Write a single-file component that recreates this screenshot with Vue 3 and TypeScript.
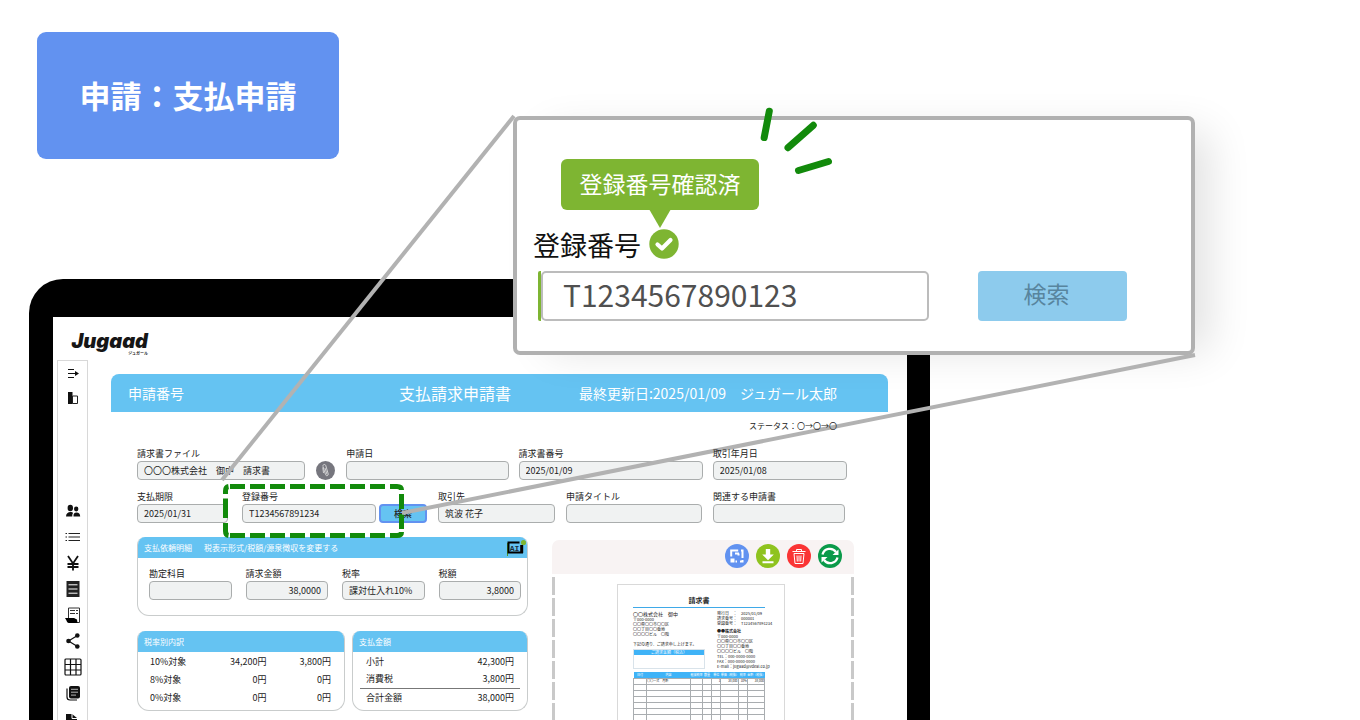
<script setup lang="ts">
interface AmountRow {
  label: string
  values: string[]
}

const taxRows: AmountRow[] = [
  { label: '10%対象', values: ['34,200円', '3,800円'] },
  { label: '8%対象', values: ['0円', '0円'] },
  { label: '0%対象', values: ['0円', '0円'] },
]

const totalRows: AmountRow[] = [
  { label: '小計', values: ['42,300円'] },
  { label: '消費税', values: ['3,800円'] },
  { label: '合計金額', values: ['38,000円'] },
]

const invoiceHead: string[] = ['日付', '内容', '軽減税率', '数量', '単位', '単価（税抜）', '税率', '金額（税抜）']
const invoiceFirst: string[] = ['', '〇〇一式　月額', '', '', '1', '38,000', '10%', '38,000']
const emptyRows = 12
</script>

<template>
  <div class="stage">
    <h1 class="badge">申請：支払申請</h1>

    <div class="device-row">
      <div class="device">
        <div class="screen">
          <header class="brand">
            <div class="logo">Jugaad</div>
            <div class="logo-sub">ジュガール</div>
          </header>
          <div class="body">
            <nav class="sidebar">
              <button aria-label="メニューを開く" class="side first">
                <svg width="14" height="14" viewBox="0 0 14 14" stroke="#111" fill="none"><path d="M2 2.500h6M2 6.500h8M2 10.500h6" stroke-width="1.200" /><path d="M9 4l4 2.500-4 2.500z" fill="#111" stroke="none" /></svg>
              </button>
              <button aria-label="パネル" class="side first">
                <svg width="14" height="14" viewBox="0 0 14 14"><path d="M2 1h4.500v12H2z" fill="#111" /><path d="M6.500 5h5v7.500h-5z" fill="none" stroke="#222" stroke-width="1" /></svg>
              </button>
              <div class="side-gap"></div>
              <button aria-label="ユーザー" class="side">
                <svg width="16" height="16" viewBox="0 0 16 16" fill="#111"><ellipse cx="5.300" cy="5" rx="2.700" ry="3.300" /><ellipse cx="11.200" cy="6" rx="2.200" ry="2.400" /><path d="M1 13.500c0-3 2-4.500 4.500-4.500 1.300 0 2 .4 2.600 1-.8 1-.9 2-.8 3.500zM8.500 13.500c-.2-2.500.7-4 3-4s3.700 1.500 3.700 4z" /></svg>
              </button>
              <button aria-label="一覧" class="side">
                <svg width="16" height="12" viewBox="0 0 16 12" stroke="#222" stroke-width="1"><path d="M.5 2.500H2M.5 6H2M.5 9.500H2M3.500 2.500H15M3.500 6H15M3.500 9.500H15" /></svg>
              </button>
              <button aria-label="支払" class="side">
                <svg width="14" height="16" viewBox="0 0 14 16" fill="none" stroke="#111" stroke-width="1.800"><path d="M2 1l5 7.500L12 1M7 8.500V15.500M1.500 9h11M1.500 12h11" /></svg>
              </button>
              <button aria-label="台帳" class="side">
                <svg width="14" height="16" viewBox="0 0 14 16"><path d="M.5 0h13v16H.5z" fill="#222" /><path d="M2.500 3.800h9M2.500 8h9M2.500 12.200h9" stroke="#fff" stroke-width="1" /></svg>
              </button>
              <button aria-label="帳票" class="side">
                <svg width="16" height="17" viewBox="0 0 16 17"><path d="M3.500 11V1h11v14.500H5" fill="#fff" stroke="#333" stroke-width="1" /><path d="M5 3.500h5M11 3.500h2M5 6.500h5M11 6.500h2" stroke="#333" stroke-width="1" /><path d="M0 11h9l3 1.500.5 3.500H4c-2 0-2-2-4-5z" fill="#000" /></svg>
              </button>
              <button aria-label="共有" class="side">
                <svg width="14" height="16" viewBox="0 0 14 16" fill="#111"><path d="M11.500 2.500L2.500 8l9 5.500" fill="none" stroke="#111" stroke-width="1.200" /><circle cx="11.300" cy="2.500" r="2.300" /><circle cx="2.500" cy="8" r="2.300" /><circle cx="11.300" cy="13.500" r="2.300" /></svg>
              </button>
              <button aria-label="表" class="side">
                <svg width="18" height="18" viewBox="0 0 18 18" fill="none" stroke="#111" stroke-width="1.200"><rect x="1" y="1" width="16" height="16" rx="1" /><path d="M6.500 1v16M12 1v16M1 6.500h16M1 12h16" /></svg>
              </button>
              <button aria-label="記事" class="side">
                <svg width="14" height="16" viewBox="0 0 14 16"><rect x="3" y="1" width="11" height="12.500" rx="2" fill="#111" /><path d="M1 3.500V12c0 2 1 3 3 3h7" fill="none" stroke="#111" stroke-width="1.200" /><path d="M5 4.300h7M5 7.200h7M5 10.100h5" stroke="#ddd" stroke-width=".8" /></svg>
              </button>
              <button aria-label="ファイル" class="side">
                <svg width="14" height="16" viewBox="0 0 14 16"><path d="M0 3h6l5 4v9H0z" fill="#111" /><path d="M6 3v4.500h5" fill="none" stroke="#fff" stroke-width="1" /></svg>
              </button>
            </nav>

            <main class="main">
              <div class="titlebar">
                <span class="t-left">申請番号</span>
                <span class="t-mid">支払請求申請書</span>
                <span class="t-right">最終更新日:2025/01/09　ジュガール太郎</span>
              </div>
              <div class="status"><span class="over">ステータス：〇→〇→〇</span></div>

              <form class="form" @submit.prevent>
                <div class="fields row1">
                  <div class="field"><label for="f-file">請求書ファイル</label><input id="f-file" value="〇〇〇株式会社　御中　請求書" /></div>
                  <button type="button" class="clip" aria-label="添付">
                    <svg width="19" height="19" viewBox="0 0 19 19"><circle cx="9.500" cy="9.500" r="9.500" fill="#76767e" /><path d="M7 5.500l2.500 8c.5 2 3.200 1.300 2.700-.6L9.800 4.600C9.200 2.700 6.500 3.400 7 5.300M9 7l2 6.500M6.800 6.500l.7 5.500" fill="none" stroke="#ddd" stroke-width=".9" /></svg>
                  </button>
                  <div class="field"><label for="f-date">申請日</label><input id="f-date" value="" /></div>
                  <div class="field"><label for="f-no">請求書番号</label><input id="f-no" value="2025/01/09" /></div>
                  <div class="field"><label for="f-deal" class="over">取引年月日</label><input id="f-deal" value="2025/01/08" /></div>
                </div>
                <div class="fields row2">
                  <div class="field c1"><label for="f-due">支払期限</label><input id="f-due" value="2025/01/31" /></div>
                  <div class="field c3"><label for="f-reg">登録番号</label><input id="f-reg" value="T1234567891234" /></div>
                  <button type="button" class="find c5">検索</button>
                  <div class="field c7"><label for="f-partner">取引先</label><input id="f-partner" value="筑波 花子" /></div>
                  <div class="field c9"><label for="f-title">申請タイトル</label><input id="f-title" value="" /></div>
                  <div class="field c11"><label for="f-rel">関連する申請書</label><input id="f-rel" value="" /></div>
                </div>
              </form>

              <div class="lower">
                <div class="details">
                  <section class="card">
                    <h2 class="card-head"><span>支払依頼明細</span><span class="card-note">税表示形式/税額/源泉徴収を変更する</span>
                      <svg class="ai" width="21" height="18" viewBox="0 0 21 18"><path d="M1.500 4v13" stroke="#4f9a24" stroke-width="1" /><path d="M1.500 3.500h12M1.500 13.500h15.500M2.500 3v11" fill="none" stroke="#000" stroke-width="2" /><path d="M15.700 6v8" stroke="#000" stroke-width="3" /><text x="8.500" y="11.500" text-anchor="middle" font-size="8" font-family="Liberation Mono" font-weight="700" fill="#1a2f3c">AI</text><circle cx="17.500" cy="3.500" r="2.600" fill="#7eb532" /></svg>
                    </h2>
                    <div class="fields detail-fields">
                      <div class="field"><label for="d-acc">勘定科目</label><input id="d-acc" value="" /></div>
                      <div class="field"><label for="d-amt">請求金額</label><input id="d-amt" class="num" value="38,0000" /></div>
                      <div class="field"><label for="d-rate">税率</label><input id="d-rate" value="課対仕入れ10%" /></div>
                      <div class="field"><label for="d-tax">税額</label><input id="d-tax" class="num" value="3,8000" /></div>
                    </div>
                  </section>
                  <div class="sums">
                    <section class="card tax">
                      <h2 class="card-head">税率別内訳</h2>
                      <table>
                        <tbody>
                          <tr v-for="r in taxRows" :key="r.label">
                            <th scope="row">{{ r.label }}</th>
                            <td v-for="(v, i) in r.values" :key="i">{{ v }}</td>
                          </tr>
                        </tbody>
                      </table>
                    </section>
                    <section class="card total">
                      <h2 class="card-head">支払金額</h2>
                      <table>
                        <tbody>
                          <tr v-for="r in totalRows" :key="r.label">
                            <th scope="row">{{ r.label }}</th>
                            <td v-for="(v, i) in r.values" :key="i">{{ v }}</td>
                          </tr>
                        </tbody>
                      </table>
                    </section>
                  </div>
                </div>

                <section class="preview">
                  <div class="tools">
                    <button aria-label="拡大">
                      <svg width="24" height="24" viewBox="0 0 24 24"><circle cx="12" cy="12" r="12" fill="#6292f0" /><path d="M6.200 12.500V6.500h7M16 6.500h1.500V14M17.500 16v1.500h-2.500M12 17.500h-1.500M6.500 15.500h2v2h-2zM10 9.500h4M13.500 9.500v2" fill="none" stroke="#fff" stroke-width="2" /></svg>
                    </button>
                    <button aria-label="ダウンロード">
                      <svg width="24" height="24" viewBox="0 0 24 24"><circle cx="12" cy="12" r="12" fill="#8fc31f" /><path d="M9.800 5h4.400v5.500h3.600L12 16.200 6.200 10.500h3.600zM6.500 17.200h11v2h-11z" fill="#fff" /></svg>
                    </button>
                    <button aria-label="削除">
                      <svg width="24" height="24" viewBox="0 0 24 24"><circle cx="12" cy="12" r="12" fill="#fa3434" /><path d="M5.500 7.500h13M9.500 7V5.500h5V7M7 9.500h10l-1 10H8zM10 11.500l.3 6M12 11.500v6M14 11.500l-.3 6" fill="none" stroke="#fff" stroke-width="1" /></svg>
                    </button>
                    <button aria-label="更新">
                      <svg width="24" height="24" viewBox="0 0 24 24"><circle cx="12" cy="12" r="12" fill="#0a9a4a" /><path d="M4.500 10.500A7.600 7.600 0 0 1 18 8M19.500 13.500A7.600 7.600 0 0 1 6 16" fill="none" stroke="#fff" stroke-width="2.300" /><path d="M20.500 5.500v5.500h-6zM3.500 18.500V13h6z" fill="#fff" /></svg>
                    </button>
                  </div>
                  <div class="preview-body">
                    <article class="paper">
                      <h3>請求書</h3>
                      <div class="cols">
                        <div class="to">
                          <p class="name">〇〇株式会社　御中</p>
                          <p>〒000-0000</p>
                          <p>〇〇県〇〇市〇〇区</p>
                          <p>〇〇丁目〇〇番地</p>
                          <p>〇〇〇〇ビル　〇階</p>
                          <p class="lead">下記の通り、ご請求申し上げます。</p>
                          <div class="amount"><p>ご請求金額（税込）</p></div>
                        </div>
                        <div class="from">
                          <p>発行日　：　2025/01/09</p>
                          <p>請求番号：　000001</p>
                          <p>登録番号：　T1234567891234</p>
                          <p class="company">●●株式会社</p>
                          <p>〒000-0000</p>
                          <p>〇〇県〇〇市〇〇区</p>
                          <p>〇〇丁目〇〇番地</p>
                          <p>〇〇〇〇ビル　〇階</p>
                          <p>TEL：000-0000-0000</p>
                          <p>FAX：000-0000-0000</p>
                          <p>E-mail：jugaad@vdeal.co.jp</p>
                        </div>
                      </div>
                      <table class="lines">
                        <colgroup>
                          <col class="w13" /><col class="w44" /><col class="w11" /><col class="w10" /><col class="w9" /><col class="w18" /><col class="w9" /><col class="w18" />
                        </colgroup>
                        <thead>
                          <tr><th v-for="h in invoiceHead" :key="h" scope="col">{{ h }}</th></tr>
                        </thead>
                        <tbody>
                          <tr><td v-for="(c, i) in invoiceFirst" :key="i">{{ c }}</td></tr>
                          <tr v-for="n in emptyRows" :key="n"><td v-for="h in invoiceHead" :key="h"></td></tr>
                        </tbody>
                      </table>
                    </article>
                  </div>
                </section>
              </div>
            </main>
          </div>
        </div>
      </div>
    </div>

    <section class="callout">
      <div class="tip">登録番号確認済</div>
      <div class="call-label">
        <label for="c-reg">登録番号</label>
        <svg width="30" height="30" viewBox="0 0 30 30"><circle cx="15" cy="15" r="14.700" fill="#7eb532" /><path d="M8.500 15.500l4.500 4 8.500-8.500" fill="none" stroke="#fff" stroke-width="4.200" stroke-linecap="round" stroke-linejoin="round" /></svg>
      </div>
      <div class="call-row">
        <div class="call-input"><input id="c-reg" value="T1234567890123" /></div>
        <button class="call-btn">検索</button>
      </div>
    </section>

    <svg class="marks" viewBox="0 0 1360 720" preserveAspectRatio="none" aria-hidden="true">
      <g fill="none" stroke="#128a0b" stroke-width="5">
        <path d="M230 486.500H390" stroke-dasharray="15 5" />
        <path d="M230 535.500H390" stroke-dasharray="15 5" />
        <path d="M225.500 498.500v19.500M401.500 494v15M401.500 514v15" />
        <path d="M225.500 494v-3q0-4 3-4.500M225.500 523v8q0 4 3 4.500M390 486.500h7q4.500 0 4.500 3.500M390 535.500h7q4.500 0 4.500-3.500" />
      </g>
      <g stroke="#b2b2b2" stroke-width="4">
        <path d="M514 116L222 480" />
        <path d="M402 513L1195 355" />
      </g>
      <g stroke="#128a0b" stroke-width="7" stroke-linecap="round">
        <path d="M769.300 111.200L764.200 137.500M813.300 125.300L788 147.700M828.500 161.500L798.500 170.500" />
      </g>
    </svg>
  </div>
</template>

<style>
body {
  margin: 0;
  background: #fff;
}
</style>

<style scoped>
.stage {
  position: relative;
  height: 100vh;
  min-height: 720px;
  overflow: hidden;
  background: #fff;
  color: #222;
  font-family: "Noto Sans CJK JP", "Noto Sans", sans-serif;
}
.stage * {
  box-sizing: border-box;
}
button,
input {
  font: inherit;
  color: inherit;
  padding: 0;
  border: 0;
  background: none;
}
h1, h2, h3, p {
  margin: 0;
  font-weight: 400;
}
svg {
  display: block;
}
.badge {
  width: 302px;
  height: 127px;
  margin: 32px 0 120px 37px;
  border-radius: 9px;
  background: #6292f0;
  color: #fff;
  font-size: 31px;
  font-weight: 700;
  line-height: 126px;
  text-align: center;
}
.device-row {
  display: grid;
  grid-template-columns: 29fr 901fr 430fr;
}
.device {
  grid-column: 2;
  padding: 38px 23px 0 24px;
  border-radius: 34px 34px 0 0;
  background: #000;
}
.screen {
  background: #fff;
  min-height: 500px;
}
.brand {
  height: 43px;
  width: 97px;
  padding: 14px 2px 0 0;
  text-align: right;
}
.logo {
  font-family: Inter, sans-serif;
  font-size: 20px;
  font-style: italic;
  font-weight: 900;
  line-height: 20px;
  color: #161616;
}
.logo-sub {
  font-size: 4px;
  font-weight: 700;
  line-height: 4px;
}
.body {
  display: grid;
  grid-template-columns: 4fr 31fr 23fr 777fr 19fr;
}
.sidebar {
  grid-column: 2;
  display: flex;
  flex-direction: column;
  padding-top: 1px;
  border: 1px solid #d8d8d8;
}
.side {
  display: flex;
  align-items: center;
  justify-content: center;
  height: 26px;
  flex: none;
}
.side.first {
  height: 24px;
}
.side-gap {
  height: 88px;
}
.main {
  grid-column: 4;
  padding-top: 14px;
}
.titlebar {
  display: grid;
  grid-template-columns: 1fr auto auto;
  align-items: center;
  height: 38px;
  padding: 0 51px 0 17px;
  border-radius: 8px 8px 0 0;
  background: #65c3f2;
  color: #fff;
  font-size: 14px;
  line-height: 20px;
  white-space: nowrap;
}
.t-mid {
  font-size: 16px;
}
.t-right {
  margin-left: 68px;
}
.status {
  margin-top: 8px;
  padding-right: 51px;
  font-size: 8px;
  line-height: 12px;
  text-align: right;
}
.over {
  position: relative;
  z-index: 4;
}
.form {
  padding: 15px 41px 0 26px;
}
.fields {
  display: grid;
  align-items: end;
  font-size: 9px;
}
.row1 {
  grid-template-columns: 168fr 21fr 162fr 184fr 134fr;
  column-gap: 10px;
}
.row2 {
  grid-template-columns: 91fr 14fr 134fr 3fr 48fr 11fr 117fr 11fr 136fr 11fr 132fr 2fr;
  margin-top: 10px;
}
.c1 { grid-column: 1; }
.c3 { grid-column: 3; }
.c5 { grid-column: 5; }
.c7 { grid-column: 7; }
.c9 { grid-column: 9; }
.c11 { grid-column: 11; }
.field {
  display: flex;
  flex-direction: column;
  gap: 1px;
  min-width: 0;
}
.field label {
  line-height: 13px;
  white-space: nowrap;
  align-self: flex-start;
}
.field input {
  width: 100%;
  height: 19px;
  padding: 0 6px;
  border: 1px solid #aaadad;
  border-radius: 4px;
  background: #f0f2f2;
}
.field input.num {
  text-align: right;
}
.clip {
  justify-self: center;
}
.find {
  height: 19px;
  border: 2px solid #6292f0;
  border-radius: 4px;
  background: #65c3f2;
  font-weight: 500;
  line-height: 15px;
}
.lower {
  display: grid;
  grid-template-columns: 391fr 302fr;
  column-gap: 24px;
  align-items: start;
  padding: 14px 34px 0 26px;
}
.card {
  padding-bottom: 4px;
  border: 1px solid #c9cccc;
  border-top: 0;
  border-radius: 8px 8px 12px 12px;
  overflow: hidden;
}
.card-head {
  display: flex;
  align-items: center;
  height: 21px;
  margin: 0 -1px;
  padding: 0 1px 0 7px;
  background: #65c3f2;
  color: #fff;
  font-size: 8px;
  line-height: 12px;
}
.card-note {
  margin-left: 12px;
}
.ai {
  margin-left: auto;
}
.detail-fields {
  grid-template-columns: 1fr 1fr 1fr 1fr;
  column-gap: 14px;
  padding: 9px 6px 11px 11px;
}
.sums {
  display: grid;
  grid-template-columns: 208fr 176fr;
  column-gap: 7px;
  margin-top: 15px;
}
.card table {
  width: 100%;
  border-collapse: collapse;
  font-size: 9px;
  line-height: 13px;
}
.card th {
  height: 18px;
  padding: 0 0 0 12px;
  font-weight: 400;
  text-align: left;
}
.card td {
  padding: 0 13px 0 0;
  text-align: right;
}
.total table {
  width: auto;
  min-width: calc(100% - 14px);
  margin: 0 7px;
}
.total th {
  padding-left: 6px;
}
.total td {
  padding-right: 6px;
}
.total tr:last-child {
  border-top: 1px solid #777;
}
.preview {
  margin-top: 3px;
}
.tools {
  display: flex;
  justify-content: flex-end;
  gap: 7px;
  height: 34px;
  padding: 4px 12px 0 0;
  border-radius: 7px 7px 0 0;
  background: #f8f3f3;
}
.tools button {
  height: 24px;
}
.preview-body {
  padding: 10px 69px 0 65px;
  background:
    repeating-linear-gradient(#fff 0 3px, #c9c9c9 3px 21px) left / 3px 100% no-repeat,
    repeating-linear-gradient(#fff 0 3px, #c9c9c9 3px 21px) right / 3px 100% no-repeat;
}
.paper {
  padding: 10px 19px 0 15px;
  border: 1px solid #d9d9d9;
  background: #fff;
  font-size: 4px;
  line-height: 5px;
  white-space: nowrap;
}
.paper h3 {
  padding-bottom: 1px;
  border-bottom: 1px solid #3fa9e8;
  font-size: 7px;
  font-weight: 700;
  line-height: 11px;
  text-align: center;
}
.cols {
  display: grid;
  grid-template-columns: 72fr 48fr;
  column-gap: 12px;
  padding-top: 3px;
}
.cols > div {
  min-width: 0;
}
.name {
  font-size: 5px;
  line-height: 6px;
}
.lead {
  margin-top: 5px;
}
.amount {
  height: 20px;
  margin-top: 2px;
  border: 1px solid #d9e3ea;
}
.amount p {
  background: #3fb3f7;
  color: #fff;
  text-align: center;
}
.company {
  margin-top: 3px;
  font-weight: 700;
}
.lines {
  width: 100%;
  margin-top: 3px;
  border-collapse: collapse;
  table-layout: fixed;
  font-size: 3px;
  line-height: 4px;
}
.lines th {
  height: 6px;
  padding: 0;
  background: #3fb3f7;
  color: #fff;
  font-weight: 400;
  text-align: center;
}
.lines td {
  height: 6px;
  padding: 0;
  border: 1px solid #a9adb0;
  text-align: right;
}
.lines td:nth-child(2) {
  text-align: left;
}
.w13 { width: 10%; }
.w44 { width: 33%; }
.w11 { width: 9%; }
.w10 { width: 7%; }
.w9 { width: 7%; }
.w18 { width: 13%; }
.callout {
  position: absolute;
  z-index: 1;
  top: 116px;
  left: 37.720%;
  width: 50.150%;
  padding: 39px 64px 30px 16px;
  border: 4px solid #b1b1b1;
  border-radius: 7px;
  background: #fff;
  box-shadow: 24px 6px 40px -10px rgba(0, 0, 0, 0.12);
}
.tip {
  position: relative;
  width: 198px;
  height: 51px;
  margin-left: 28px;
  border-radius: 6px;
  background: #7eb532;
  color: #fff;
  font-size: 23px;
  line-height: 48px;
  text-align: center;
}
.tip::after {
  content: "";
  position: absolute;
  top: 50px;
  left: 88px;
  border: 11px solid transparent;
  border-top: 19px solid #7eb532;
  border-bottom: 0;
}
.call-label {
  display: flex;
  align-items: center;
  gap: 8px;
  margin-top: 16px;
  height: 38px;
  color: #111;
  font-size: 27px;
  line-height: 38px;
}
.call-label svg {
  margin-top: -2px;
}
.call-row {
  display: grid;
  grid-template-columns: 391fr 149fr;
  column-gap: 49px;
  margin-top: 7px;
  padding-left: 5px;
}
.call-input {
  border-left: 3px solid #7eb532;
  border-radius: 2px;
}
.call-input input {
  display: block;
  width: 100%;
  height: 50px;
  padding: 0 20px 4px;
  border: 2px solid #bcbcbc;
  border-radius: 5px;
  color: #505050;
  font-size: 30px;
}
.call-btn {
  height: 50px;
  padding: 0 12px 6px 0;
  border-radius: 4px;
  background: #8dcbed;
  color: #58859e;
  font-size: 23px;
}
.marks {
  position: absolute;
  z-index: 3;
  top: 0;
  left: 0;
  width: 100%;
  height: 720px;
  pointer-events: none;
}
</style>
